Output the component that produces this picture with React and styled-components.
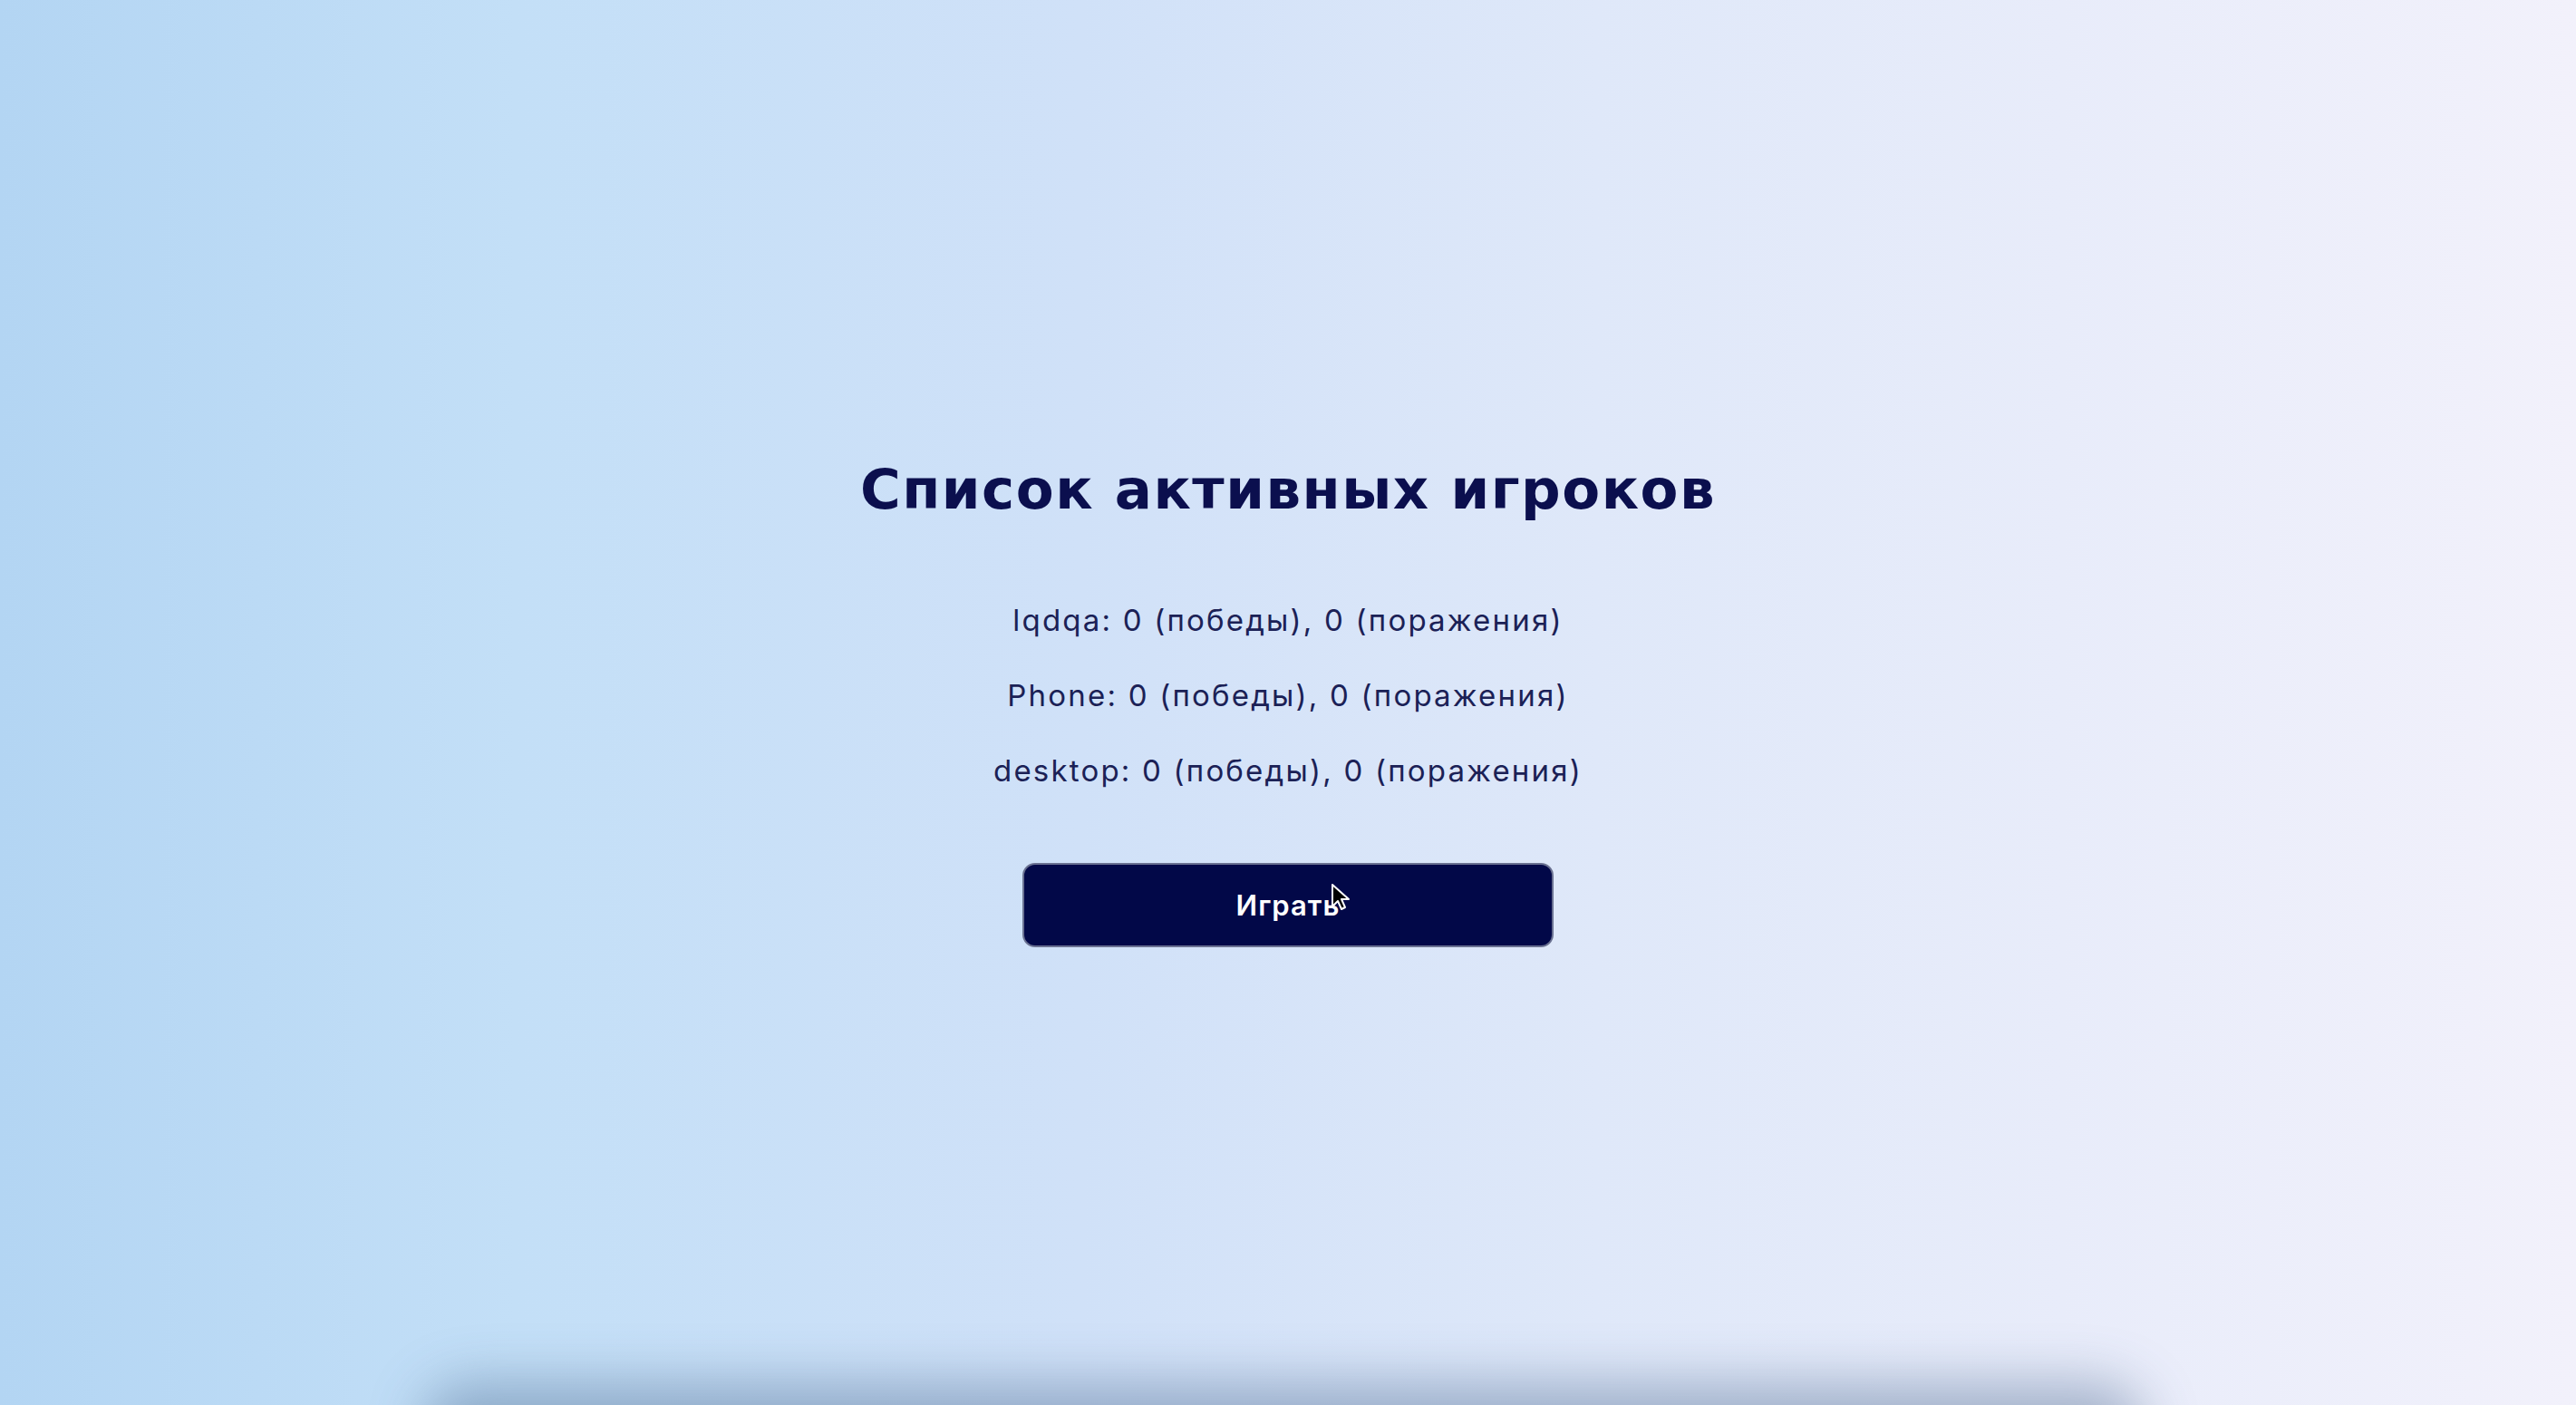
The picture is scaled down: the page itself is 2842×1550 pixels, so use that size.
import React from "react";
import styled, { createGlobalStyle } from "styled-components";

const GlobalStyle = createGlobalStyle`
  html, body {
    margin: 0;
    padding: 0;
    height: 100%;
    overflow: hidden;
  }
  body {
    font-family: "Inter", "Noto Sans", sans-serif;
  }
`;

const Page = styled.div`
  position: relative;
  height: 100vh;
  display: flex;
  align-items: center;
  justify-content: center;
  background: linear-gradient(
    to right,
    #b3d5f3 0%,
    #c3dff7 20%,
    #d0e1f8 42%,
    #dfe8f9 62%,
    #e8ecfa 80%,
    #f2f1fb 100%
  );
  overflow: hidden;
`;

const BottomShade = styled.div`
  position: absolute;
  left: 480px;
  right: 490px;
  top: 100%;
  height: 80px;
  border-radius: 40px;
  box-shadow: 0 -10px 60px 14px rgba(60, 90, 130, 0.4);
`;

const Panel = styled.div`
  display: flex;
  flex-direction: column;
  align-items: center;
`;

const Title = styled.h1`
  margin: 0 0 89px;
  font-family: "DejaVu Sans", "Inter", sans-serif;
  font-size: 61px;
  line-height: 70px;
  font-weight: 700;
  letter-spacing: 1.5px;
  color: #0b0f4e;
`;

const PlayerList = styled.ul`
  list-style: none;
  margin: 0;
  padding: 0;
  display: flex;
  flex-direction: column;
  align-items: center;
  gap: 43px;
`;

const PlayerRow = styled.li`
  font-size: 33px;
  line-height: 40px;
  font-weight: 400;
  letter-spacing: 2.2px;
  color: #1b2156;
`;

const ButtonWrap = styled.div`
  position: relative;
  margin-top: 82px;
`;

const PlayButton = styled.button`
  width: 586px;
  height: 93px;
  border-radius: 14px;
  border: 2px solid #6a7191;
  background: #020848;
  color: #ffffff;
  font-family: "Inter", "Noto Sans", sans-serif;
  font-size: 31px;
  font-weight: 600;
  letter-spacing: 1px;
  cursor: pointer;
`;

const Cursor = styled.svg`
  position: absolute;
  left: 340px;
  top: 22px;
  width: 24px;
  height: 32px;
  pointer-events: none;
`;

const players = [
  { name: "lqdqa", wins: 0, losses: 0 },
  { name: "Phone", wins: 0, losses: 0 },
  { name: "desktop", wins: 0, losses: 0 },
];

export default function App() {
  return (
    <>
      <GlobalStyle />
      <Page>
        <Panel>
          <Title>Список активных игроков</Title>
          <PlayerList>
            {players.map((p) => (
              <PlayerRow key={p.name}>
                {p.name}: {p.wins} (победы), {p.losses} (поражения)
              </PlayerRow>
            ))}
          </PlayerList>
          <ButtonWrap>
            <PlayButton>Играть</PlayButton>
            <Cursor viewBox="0 0 24 32">
              <path
                d="M2 2 L2 26 L8 20 L12 29 L16 27 L12 18 L20 18 Z"
                fill="#000"
                stroke="#fff"
                strokeWidth="2"
                strokeLinejoin="round"
              />
            </Cursor>
          </ButtonWrap>
        </Panel>
        <BottomShade />
      </Page>
    </>
  );
}
